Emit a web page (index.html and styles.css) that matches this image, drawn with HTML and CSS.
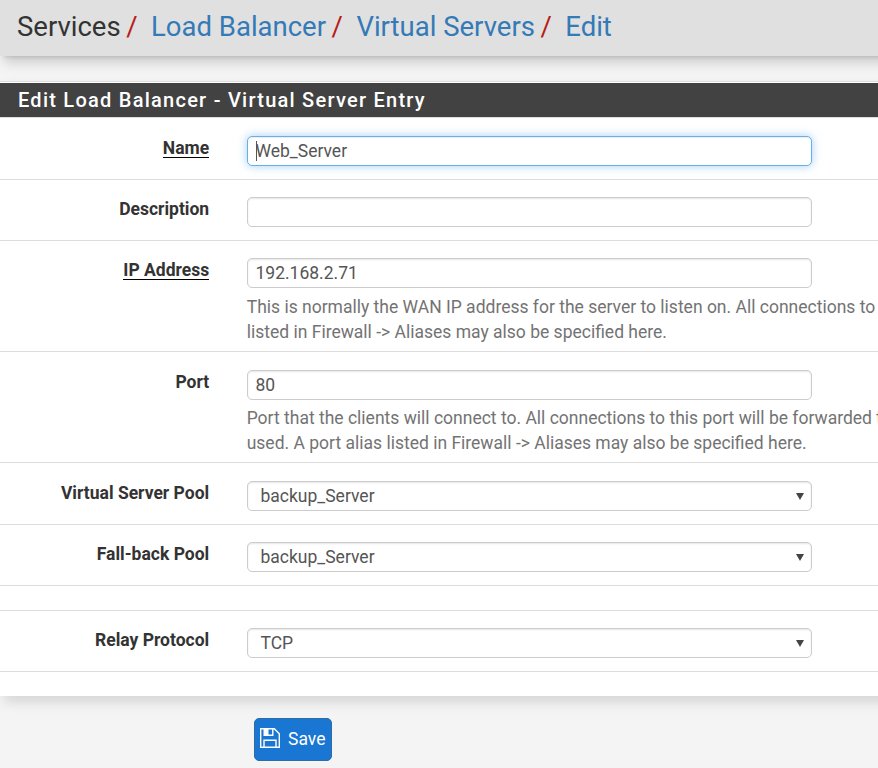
FILE: index.html
```html
<!DOCTYPE html>
<html lang="en">
<head>
<meta charset="utf-8">
<title>Services: Load Balancer: Virtual Servers: Edit</title>
<link rel="stylesheet" href="styles.css">
</head>
<body>
<header class="page-header">
  <ol class="breadcrumb">
    <li>Services</li>
    <li><a href="#">Load Balancer</a></li>
    <li><a href="#">Virtual Servers</a></li>
    <li><a href="#">Edit</a></li>
  </ol>
</header>
<form>
  <section class="panel">
    <h2 class="panel-heading">Edit Load Balancer - Virtual Server Entry</h2>
    <div class="form-group tall">
      <label class="control-label" for="name"><span class="required">Name</span></label>
      <div class="field"><input class="form-control focused" id="name" value="Web_Server"><span class="caret"></span></div>
    </div>
    <div class="form-group">
      <label class="control-label" for="descr">Description</label>
      <div class="field"><input class="form-control" id="descr"></div>
    </div>
    <div class="form-group address">
      <label class="control-label" for="ip"><span class="required">IP Address</span></label>
      <div class="field"><input class="form-control" id="ip" value="192.168.2.71">
        <p class="help">This is normally the WAN IP address for the server to listen on. All connections to<br>listed in Firewall -&gt; Aliases may also be specified here.</p></div>
    </div>
    <div class="form-group tall port">
      <label class="control-label" for="port">Port</label>
      <div class="field"><input class="form-control" id="port" value="80">
        <p class="help">Port that the clients will connect to. All connections to this port will be forwarded to<br>used. A port alias listed in Firewall -&gt; Aliases may also be specified here.</p></div>
    </div>
    <div class="form-group tall">
      <label class="control-label" for="pool">Virtual Server Pool</label>
      <div class="field"><select class="form-control" id="pool"><option>backup_Server</option></select><span class="arrow"></span></div>
    </div>
    <div class="form-group">
      <label class="control-label" for="fallback">Fall-back Pool</label>
      <div class="field"><select class="form-control" id="fallback"><option>backup_Server</option></select><span class="arrow"></span></div>
    </div>
    <div class="spacer"></div>
    <div class="form-group">
      <label class="control-label" for="relay">Relay Protocol</label>
      <div class="field"><select class="form-control" id="relay"><option>TCP</option></select><span class="arrow"></span></div>
    </div>
    <div class="panel-end"></div>
  </section>
  <div class="actions">
    <button class="save" type="button">
      <svg width="20" height="20" viewBox="0 0 20 20" fill="none" stroke="#fff" stroke-width="1.400"><path d="M.7.7h13.600l5 5v13.600H.7zM4 19v-6.800h12V19M4.200 1v6.300h8.600V1"/><path d="M4.200 1h4.300v6.300H4.200z" fill="#fff" stroke="none"/></svg>
      <span>Save</span>
    </button>
  </div>
</form>
</body>
</html>
```
FILE: styles.css
```css
* { box-sizing: border-box; }
body {
  margin: 0;
  height: 768px;
  overflow: hidden;
  background: #f4f4f4;
  color: #333;
  font: 17.5px/25px Roboto, sans-serif;
}
.page-header {
  position: relative;
  height: 56px;
  padding: 7px 17px 0;
  background: #e0e0e0;
}
.page-header::after,
.panel::after {
  content: "";
  position: absolute;
  z-index: -1;
  inset: 0 -20px 0 4px;
  box-shadow: 0 6px 12px rgba(0, 0, 0, .175), 0 1px 4px rgba(0, 0, 0, .12);
}
.breadcrumb {
  display: flex;
  margin: 0;
  padding: 0;
  list-style: none;
  font-size: 27.5px;
  line-height: 39px;
  white-space: nowrap;
}
.breadcrumb li + li::before {
  content: "/";
  padding: 0 13.500px 0 5.500px;
  color: #b71c1c;
}
a { color: #337ab7; text-decoration: none; }
.panel {
  position: relative;
  margin-top: 25px;
  border-top: 1px solid #ddd;
  padding-top: 1px;
  background: #fff;
}
.panel::after { box-shadow: 0 6px 12px rgba(0, 0, 0, .13); }
.panel-heading {
  height: 35px;
  margin: 0;
  padding: 0 18px;
  border-bottom: 1px solid #ddd;
  background: #424242;
  background-clip: padding-box;
  color: #fff;
  font-size: 20px;
  font-weight: 500;
  line-height: 34px;
  letter-spacing: 1.25px;
}
.form-group {
  display: flex;
  padding: 17px 0 13px;
  border-bottom: 1px solid #ddd;
}
.tall { padding-top: 18px; }
.address { padding-bottom: 12px; }
.address .help { margin-top: 7px; }
.port { padding-bottom: 12px; }
.control-label {
  width: 209.200px;
  margin-right: 37.800px;
  text-align: right;
  font-weight: 700;
  line-height: 24px;
}
.required {
  display: inline-block;
  height: 22px;
  border-bottom: 1px solid #000;
}
.field { position: relative; width: 565px; }
.form-control {
  display: block;
  width: 565px;
  height: 30px;
  padding: 0 7.500px;
  border: 1px solid #ccc;
  border-radius: 5px;
  background: #fff;
  box-shadow: inset 0 1px 2px rgba(0, 0, 0, .1);
  color: #555;
  font: 17.5px Roboto, sans-serif;
}
select.form-control { padding-left: 12.500px; appearance: none; }
.focused {
  border-color: #66afe9;
  box-shadow: inset 0 1px 1px rgba(0, 0, 0, .075), 0 0 10px rgba(102, 175, 233, .6);
}
.caret {
  position: absolute;
  top: 5px;
  left: 9px;
  width: 1px;
  height: 20px;
  background: #555;
}
.arrow {
  position: absolute;
  top: 12px;
  right: 8px;
  border: solid transparent;
  border-width: 7px 4px 0;
  border-top-color: #444;
}
.help {
  margin: 6px 0 -6px -.3px;
  color: #737373;
  white-space: nowrap;
}
.spacer { height: 25px; border-bottom: 1px solid #ddd; }
.panel-end { height: 24px; }
.actions { padding: 22px 0 0 254px; }
.save {
  display: flex;
  align-items: center;
  gap: 8px;
  width: 78px;
  height: 43px;
  padding: 0 0 2px 5px;
  border: 1px solid #2e6da4;
  border-radius: 5px;
  background: #1976d2;
  color: #fff;
  font: 17.5px Roboto, sans-serif;
}
.save svg { position: relative; top: -1px; }
```
